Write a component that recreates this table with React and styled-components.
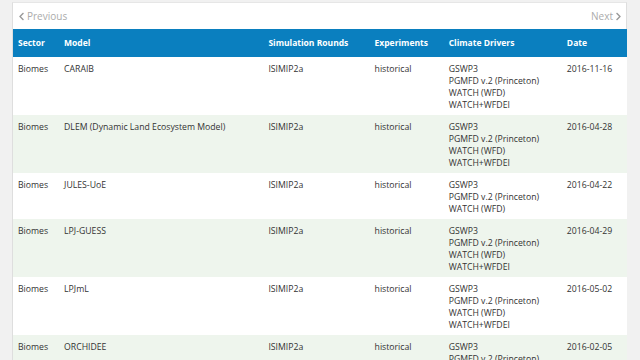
import React from 'react';
import styled, { createGlobalStyle } from 'styled-components';
import { FaChevronLeft, FaChevronRight } from 'react-icons/fa';

const GlobalStyle = createGlobalStyle`
  html, body {
    margin: 0;
    padding: 0;
    background: #f1f1f1;
    font-family: "Open Sans", "Liberation Sans", sans-serif;
  }
`;

const drivers4 = ['GSWP3', 'PGMFD v.2 (Princeton)', 'WATCH (WFD)', 'WATCH+WFDEI'];
const drivers3 = ['GSWP3', 'PGMFD v.2 (Princeton)', 'WATCH (WFD)'];

const rows = [
  { sector: 'Biomes', model: 'CARAIB', round: 'ISIMIP2a', exp: 'historical', drivers: drivers4, date: '2016-11-16' },
  { sector: 'Biomes', model: 'DLEM (Dynamic Land Ecosystem Model)', round: 'ISIMIP2a', exp: 'historical', drivers: drivers4, date: '2016-04-28' },
  { sector: 'Biomes', model: 'JULES-UoE', round: 'ISIMIP2a', exp: 'historical', drivers: drivers3, date: '2016-04-22' },
  { sector: 'Biomes', model: 'LPJ-GUESS', round: 'ISIMIP2a', exp: 'historical', drivers: drivers4, date: '2016-04-29' },
  { sector: 'Biomes', model: 'LPJmL', round: 'ISIMIP2a', exp: 'historical', drivers: drivers4, date: '2016-05-02' },
  { sector: 'Biomes', model: 'ORCHIDEE', round: 'ISIMIP2a', exp: 'historical', drivers: drivers4, date: '2016-02-05' },
];

const widths = [46, 204, 106, 74, 118, 65];

const App = () => {
  return (
    <>
      <GlobalStyle />
      <Page>
        <Panel>
          <Pager>
            <PagerLink>
              <FaChevronLeft className="ico" />
              Previous
            </PagerLink>
            <PagerLink>
              Next
              <FaChevronRight className="ico" />
            </PagerLink>
          </Pager>
          <Table>
            <colgroup>
              {widths.map((w, i) => (
                <col key={i} style={{ width: w }} />
              ))}
            </colgroup>
            <thead>
              <tr>
                <Th>Sector</Th>
                <Th>Model</Th>
                <Th>Simulation Rounds</Th>
                <Th>Experiments</Th>
                <Th>Climate Drivers</Th>
                <Th>Date</Th>
              </tr>
            </thead>
            <tbody>
              {rows.map((r, i) => (
                <Row key={i} $striped={i % 2 === 1}>
                  <Td>{r.sector}</Td>
                  <Td>{r.model}</Td>
                  <Td>{r.round}</Td>
                  <Td>{r.exp}</Td>
                  <Td>
                    {r.drivers.map((d) => (
                      <div key={d}>{d}</div>
                    ))}
                  </Td>
                  <Td>{r.date}</Td>
                </Row>
              ))}
            </tbody>
          </Table>
        </Panel>
      </Page>
    </>
  );
};

export default App;

const Page = styled.div`
  padding: 2px 13px 0 12px;
  height: 360px;
  box-sizing: border-box;
  overflow: hidden;
`;

const Panel = styled.div`
  background: #fff;
  border-left: 1px solid #dedede;
  border-right: 1px solid #dedede;
  border-top: 1px solid #e6e6e6;
  min-height: 400px;
`;

const Pager = styled.div`
  display: flex;
  justify-content: space-between;
  align-items: center;
  height: 26px;
  padding: 0 4px 0 5px;
`;

const PagerLink = styled.a`
  display: flex;
  align-items: center;
  gap: 2px;
  color: #ababab;
  font-size: 10px;
  .ico {
    width: 7px;
    height: 9px;
    color: #999;
  }
`;

const Table = styled.table`
  width: 614px;
  table-layout: fixed;
  border-collapse: collapse;
  font-size: 8.7px;
  line-height: 12px;
  color: #333;
`;

const Th = styled.th`
  background: #0a7fbf;
  color: #fff;
  font-weight: 700;
  font-size: 8.5px;
  text-align: left;
  padding: 8px 5px;
  white-space: nowrap;
`;

const Row = styled.tr`
  background: ${(p) => (p.$striped ? '#eef5ed' : '#fff')};
`;

const Td = styled.td`
  vertical-align: top;
  padding: 6px 5px 4px;
  white-space: nowrap;
`;
